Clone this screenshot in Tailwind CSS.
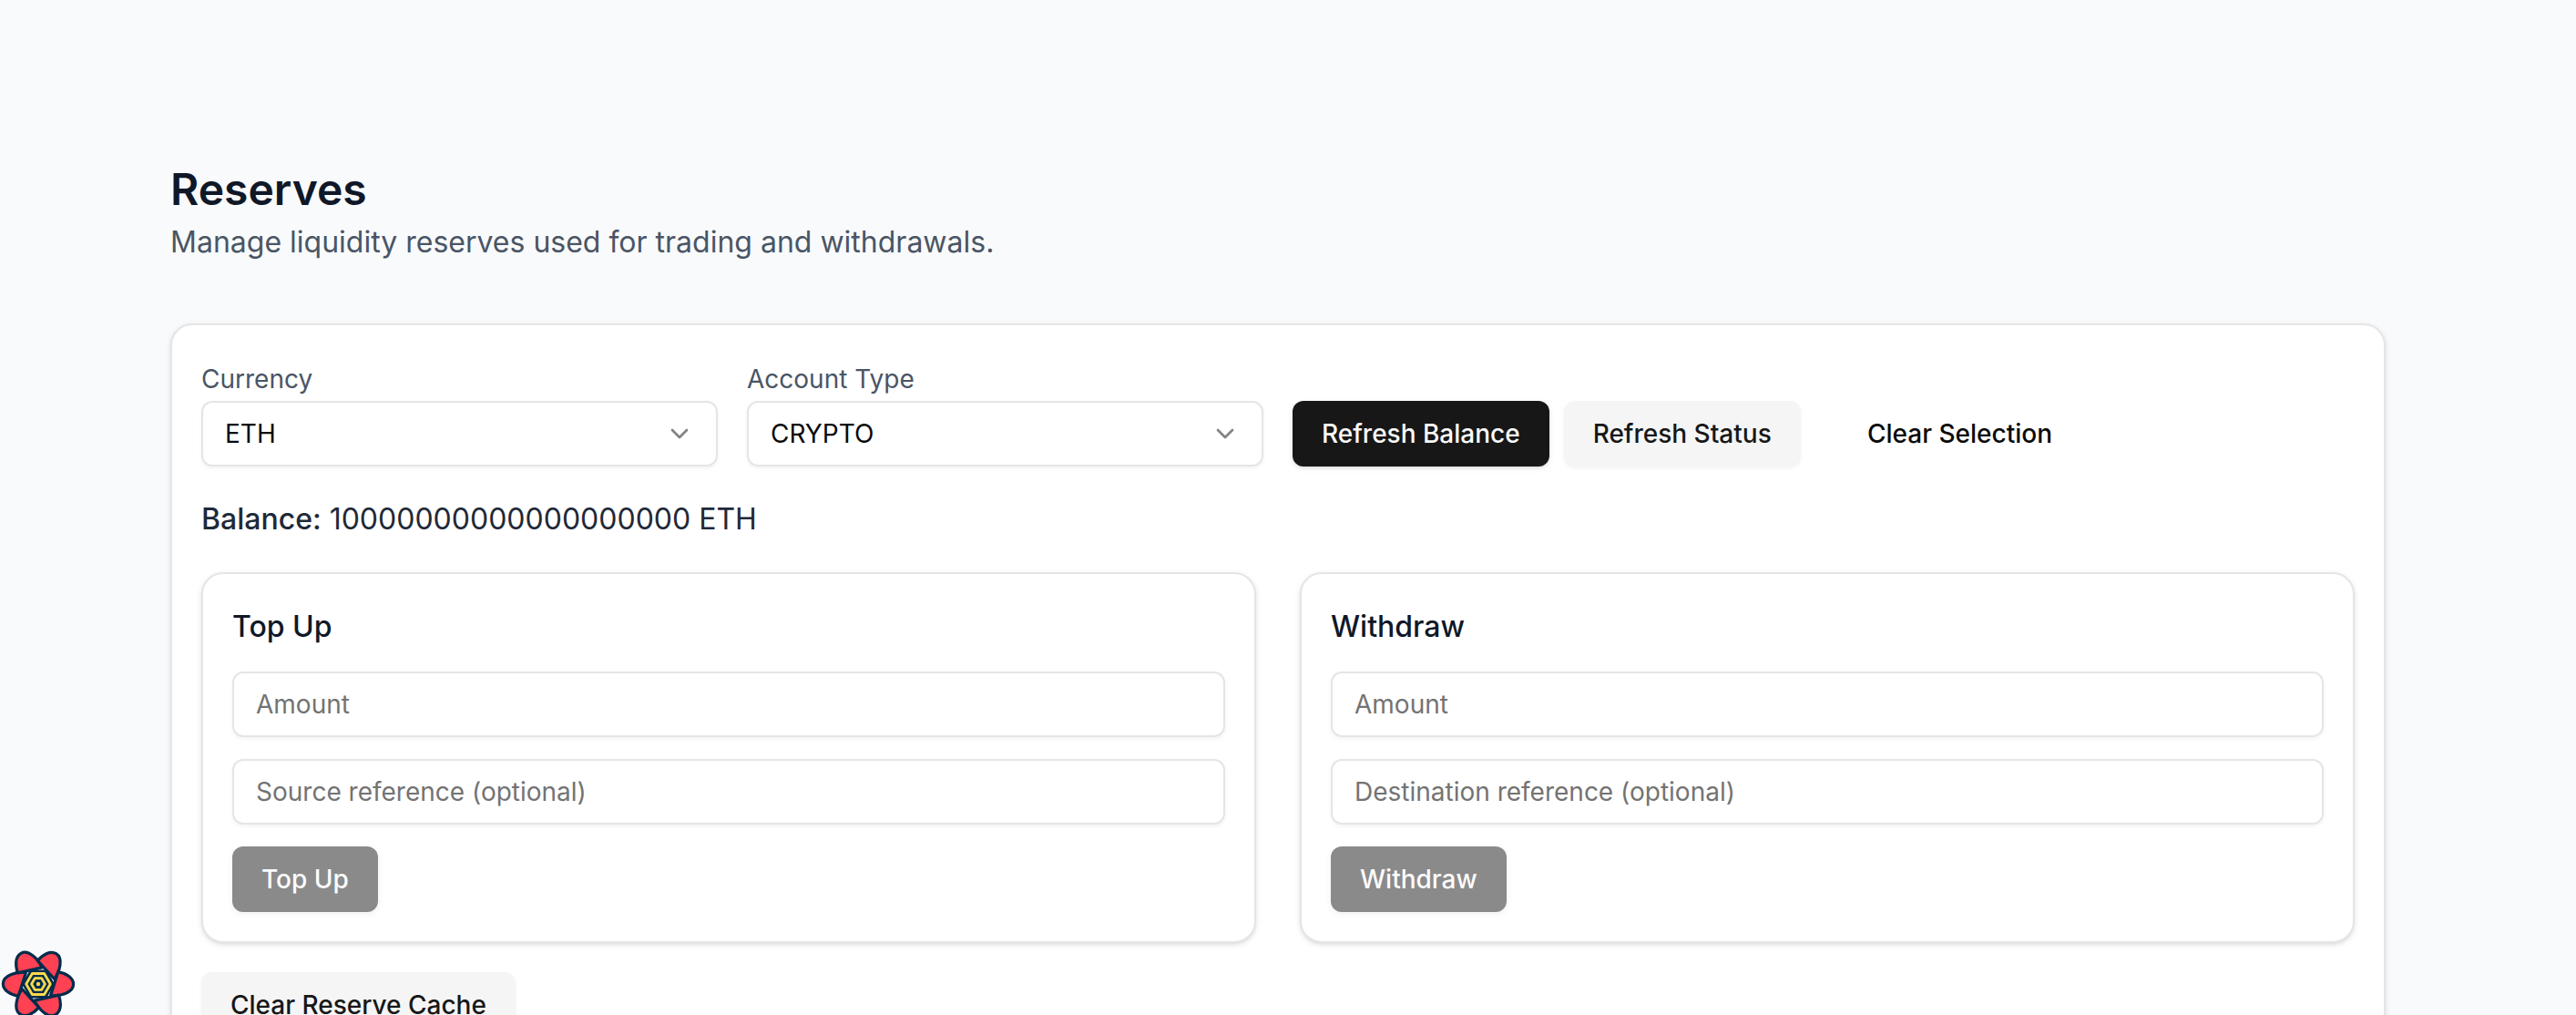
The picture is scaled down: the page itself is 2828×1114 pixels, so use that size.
<!DOCTYPE html>
<html lang="en">
<head>
<meta charset="utf-8">
<title>Reserves</title>
<script src="https://cdn.jsdelivr.net/npm/@tailwindcss/browser@4"></script>
</head>
<body class="relative h-[1114px] overflow-hidden bg-gray-50 font-['Inter',sans-serif] text-[28px] leading-10 text-neutral-950 antialiased">
<main class="ml-[187px] w-[2432px] pt-44">
  <h1 class="text-5xl leading-[64px] font-semibold text-gray-900">Reserves</h1>
  <p class="mt-[2px] text-[32px] leading-12 text-gray-600">Manage liquidity reserves used for trading and withdrawals.</p>

  <section class="mt-[65px] h-[900px] rounded-3xl border-2 border-neutral-200 bg-white px-8 pt-[39px] shadow-[0_2px_6px_rgba(0,0,0,0.1),0_2px_4px_-2px_rgba(0,0,0,0.1)]">
    <div class="grid grid-cols-4 items-end gap-8">
      <label class="flex flex-col gap-1">
        <span class="text-gray-600">Currency</span>
        <span class="flex h-18 items-center justify-between rounded-xl border-2 border-neutral-200 px-6 shadow-[0_2px_4px_rgba(0,0,0,0.05)]">ETH
          <svg class="size-8 opacity-50" viewBox="0 0 24 24" fill="none" stroke="currentColor" stroke-width="2" stroke-linecap="round" stroke-linejoin="round"><path d="m6 9 6 6 6-6"/></svg>
        </span>
      </label>
      <label class="flex flex-col gap-1">
        <span class="text-gray-600">Account Type</span>
        <span class="flex h-18 items-center justify-between rounded-xl border-2 border-neutral-200 px-6 shadow-[0_2px_4px_rgba(0,0,0,0.05)]">CRYPTO
          <svg class="size-8 opacity-50" viewBox="0 0 24 24" fill="none" stroke="currentColor" stroke-width="2" stroke-linecap="round" stroke-linejoin="round"><path d="m6 9 6 6 6-6"/></svg>
        </span>
      </label>
      <div class="flex gap-4">
        <button class="h-18 rounded-xl bg-neutral-900 px-8 font-medium whitespace-nowrap text-neutral-50 shadow-[0_2px_6px_rgba(0,0,0,0.1),0_2px_4px_-2px_rgba(0,0,0,0.1)]">Refresh Balance</button>
        <button class="h-18 rounded-xl bg-neutral-100 px-8 font-medium whitespace-nowrap text-neutral-900 shadow-[0_2px_4px_rgba(0,0,0,0.05)]">Refresh Status</button>
      </div>
      <button class="h-18 justify-self-start rounded-xl px-8 font-medium">Clear Selection</button>
    </div>

    <p class="mt-[34px] text-[32px] leading-12 text-gray-800"><span class="font-medium">Balance:</span> 10000000000000000000 ETH</p>

    <div class="mt-[34px] grid grid-cols-2 gap-12">
      <div class="rounded-3xl border-2 border-neutral-200 bg-white px-8 pt-[34px] pb-8 shadow-[0_2px_6px_rgba(0,0,0,0.1),0_2px_4px_-2px_rgba(0,0,0,0.1)]">
        <h2 class="mb-[25px] text-[32px] leading-12 font-medium text-gray-900">Top Up</h2>
        <div class="flex flex-col items-start gap-6">
          <input class="h-18 w-full rounded-xl border-2 border-neutral-200 px-6 shadow-[0_2px_4px_rgba(0,0,0,0.05)] placeholder:text-neutral-500" placeholder="Amount">
          <input class="h-18 w-full rounded-xl border-2 border-neutral-200 px-6 shadow-[0_2px_4px_rgba(0,0,0,0.05)] placeholder:text-neutral-500" placeholder="Source reference (optional)">
          <button class="h-18 rounded-xl bg-neutral-900 px-8 font-medium text-neutral-50 opacity-50 shadow-[0_2px_6px_rgba(0,0,0,0.1)]">Top Up</button>
        </div>
      </div>
      <div class="rounded-3xl border-2 border-neutral-200 bg-white px-8 pt-[34px] pb-8 shadow-[0_2px_6px_rgba(0,0,0,0.1),0_2px_4px_-2px_rgba(0,0,0,0.1)]">
        <h2 class="mb-[25px] text-[32px] leading-12 font-medium text-gray-900">Withdraw</h2>
        <div class="flex flex-col items-start gap-6">
          <input class="h-18 w-full rounded-xl border-2 border-neutral-200 px-6 shadow-[0_2px_4px_rgba(0,0,0,0.05)] placeholder:text-neutral-500" placeholder="Amount">
          <input class="h-18 w-full rounded-xl border-2 border-neutral-200 px-6 shadow-[0_2px_4px_rgba(0,0,0,0.05)] placeholder:text-neutral-500" placeholder="Destination reference (optional)">
          <button class="h-18 rounded-xl bg-neutral-900 px-8 font-medium text-neutral-50 opacity-50 shadow-[0_2px_6px_rgba(0,0,0,0.1)]">Withdraw</button>
        </div>
      </div>
    </div>

    <button class="mt-8 h-18 rounded-xl bg-neutral-100 px-8 font-medium text-neutral-900 shadow-[0_2px_4px_rgba(0,0,0,0.05)]">Clear Reserve Cache</button>
  </section>
</main>

<!-- Query devtools toggle -->
<button class="absolute top-[1038px] left-0 size-[84px]" aria-label="Open query devtools">
  <svg class="size-[84px]" viewBox="-42 -42 84 84">
    <defs>
      <path id="petal" d="M-13.6-12.6C-23-13.6-38.6-10-38.6-.3C-38.6 6.8-31 11.6-21.8 13.4Z"/>
    </defs>
    <path fill="#002c4b" d="M-18 0-9-15.6H9L18 0 9 15.6H-9Z"/>
    <g fill="#ff4154" stroke="#002c4b" stroke-width="3.2" stroke-linejoin="round">
      <use href="#petal"/>
      <use href="#petal" transform="rotate(60)"/>
      <use href="#petal" transform="rotate(120)"/>
      <use href="#petal" transform="rotate(180)"/>
      <use href="#petal" transform="rotate(240)"/>
      <use href="#petal" transform="rotate(300)"/>
    </g>
    <path fill="#002c4b" d="M-16.5 0-8.2-14.3H8.2L16.5 0 8.2 14.3H-8.2Z"/>
    <g fill="none" stroke="#ffd94c" stroke-width="2.8" stroke-linejoin="round">
      <path d="M-13.3 0-6.6-11.5H6.6L13.3 0 6.6 11.5H-6.6Z"/>
      <path d="M-7.4 0-3.7-6.4H3.7L7.4 0 3.7 6.4H-3.7Z"/>
    </g>
    <circle r="2.2" fill="#ffd94c"/>
  </svg>
</button>
</body>
</html>
